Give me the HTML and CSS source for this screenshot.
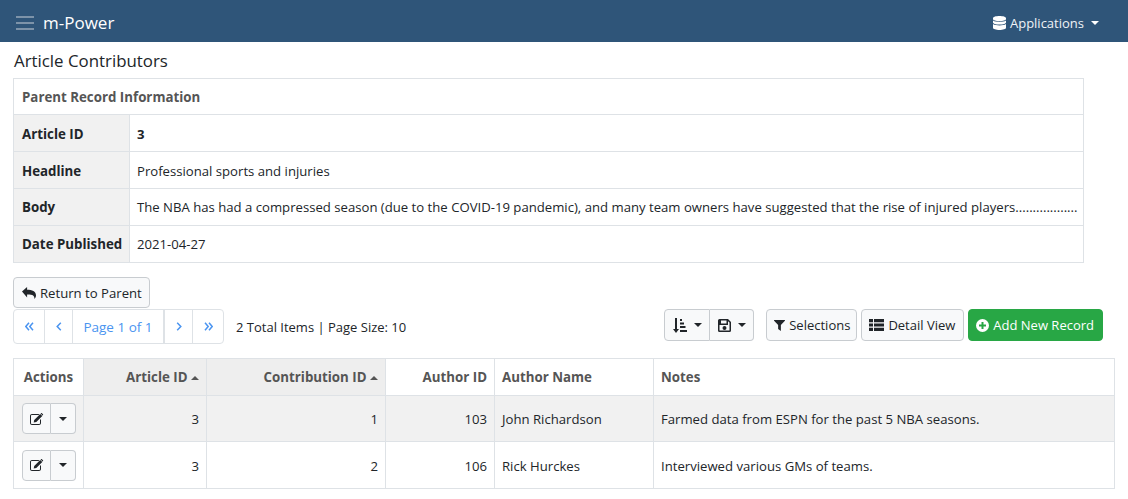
FILE: index.html
```html
<!DOCTYPE html>
<html lang="en">
<head>
<meta charset="utf-8">
<title>Article Contributors</title>
<link rel="stylesheet" href="styles.css">
</head>
<body>
<header class="navbar">
  <div class="brand">
    <svg class="burger" width="18" height="14" viewBox="0 0 18 14"><path d="M0 1h18M0 7h18M0 13h18" stroke="#7d93a9" stroke-width="2"/></svg>
    <span class="brand-name">m-Power</span>
  </div>
  <div class="apps">
    <svg class="apps-icon" width="13" height="14" viewBox="0 0 13 14"><path fill="#fff" d="M6.500 0C10 0 13 .9 13 2.200v.8c0 1.300-3 2.200-6.500 2.200S0 4.300 0 3v-.8C0 .9 3 0 6.500 0zM0 4.500c1.400 1 3.900 1.400 6.500 1.400s5.100-.4 6.500-1.400v2C13 7.700 10 8.600 6.500 8.600S0 7.700 0 6.500zM0 8c1.400 1 3.900 1.400 6.500 1.400S11.600 9 13 8v3.800C13 13.100 10 14 6.500 14S0 13.100 0 11.800z"/></svg>
    <span>Applications</span>
    <span class="caret caret-light"></span>
  </div>
</header>

<main class="page">
  <h1 class="title">Article Contributors</h1>

  <table class="parent">
    <colgroup><col class="parent-label"><col></colgroup>
    <tr class="parent-top"><th colspan="2" class="parent-head">Parent Record Information</th></tr>
    <tr class="nudge"><th>Article ID</th><td><b>3</b></td></tr>
    <tr class="nudge"><th>Headline</th><td>Professional sports and injuries</td></tr>
    <tr><th>Body</th><td>The NBA has had a compressed season (due to the COVID-19 pandemic), and many team owners have suggested that the rise of injured players..................</td></tr>
    <tr><th>Date Published</th><td>2021-04-27</td></tr>
  </table>

  <button class="btn return">
    <svg width="14" height="12" viewBox="0 0 14 12"><path fill="#212529" d="M0 4.600 5.100 0v2.800C10 2.900 14 4 14 8.600c0 1.500-.8 2.600-1.700 3.400.6-3.300-1.700-4.700-7.200-4.600v3z"/></svg>
    Return to Parent
  </button>

  <div class="toolbar">
    <nav class="pager">
      <a class="pg pg-first"><svg width="9" height="9" viewBox="0 0 9 9"><path d="M4 .8.8 4.500 4 8.200M8 .8 4.800 4.500 8 8.200" fill="none" stroke="#4a94f0" stroke-width="1.500"/></svg></a>
      <a class="pg pg-prev"><svg width="6" height="9" viewBox="0 0 6 9"><path d="M4.800.8 1.200 4.500l3.600 3.700" fill="none" stroke="#4a94f0" stroke-width="1.500"/></svg></a>
      <a class="pg pg-label">Page 1 of 1</a>
      <a class="pg pg-next"><svg width="6" height="9" viewBox="0 0 6 9"><path d="M1.200.8 4.800 4.500 1.200 8.200" fill="none" stroke="#4a94f0" stroke-width="1.500"/></svg></a>
      <a class="pg pg-last"><svg width="9" height="9" viewBox="0 0 9 9"><path d="M1 .8 4.200 4.500 1 8.200M5 .8 8.200 4.500 5 8.200" fill="none" stroke="#4a94f0" stroke-width="1.500"/></svg></a>
    </nav>
    <span class="summary">2 Total Items | Page Size: 10</span>
    <div class="tools">
      <div class="btn-group">
        <button class="btn">
          <svg width="14" height="15" viewBox="0 0 14 15"><path fill="#212529" d="M2 0h2v11h2l-3 4-3-4h2zM7 1h2v2H7zM7 4.500h4v2H7zM7 8h5.500v2H7zM7 12h7v2H7z"/></svg>
          <span class="caret"></span>
        </button>
        <button class="btn">
          <svg width="13" height="13" viewBox="0 0 13 13"><path fill="#212529" fill-rule="evenodd" d="M1.500 0H10l3 3v8.500A1.500 1.500 0 0 1 11.500 13h-10A1.500 1.500 0 0 1 0 11.500v-10A1.500 1.500 0 0 1 1.500 0zM3 1.500V4.500h5.500V1.500zM1.500 1.500v10h10V3.600L10 2.200v3.800H1.500zM6.500 7a2 2 0 1 1 0 4 2 2 0 0 1 0-4z"/></svg>
          <span class="caret"></span>
        </button>
      </div>
      <button class="btn btn-sel">
        <svg width="11" height="11" viewBox="0 0 12 12"><path fill="#212529" d="M.5 0h11c.5 0 .7.600.4.900L7.500 5.500V12L4.500 9.700V5.500L.1.900C-.2.600 0 0 .5 0z"/></svg>
        Selections
      </button>
      <button class="btn btn-detail">
        <svg width="15" height="12" viewBox="0 0 15 12"><path fill="#212529" d="M0 0h4v3.200H0zM5 0h10v3.200H5zM0 4.400h4v3.200H0zM5 4.400h10v3.200H5zM0 8.800h4V12H0zM5 8.800h10V12H5z"/></svg>
        Detail View
      </button>
      <button class="btn btn-add">
        <svg width="13" height="13" viewBox="0 0 13 13"><path fill="#fff" fill-rule="evenodd" d="M6.500 0a6.500 6.500 0 1 1 0 13 6.500 6.500 0 0 1 0-13zM5.500 3v2.500H3v2h2.500V10h2V7.500H10v-2H7.500V3z"/></svg>
        Add New Record
      </button>
    </div>
  </div>

  <table class="grid">
    <thead>
      <tr>
        <th class="col-act">Actions</th>
        <th class="num sorted col-art">Article ID <span class="sort"></span></th>
        <th class="num sorted col-con">Contribution ID <span class="sort"></span></th>
        <th class="num col-auth">Author ID</th>
        <th class="col-name">Author Name</th>
        <th>Notes</th>
      </tr>
    </thead>
    <tbody>
      <tr class="odd">
        <td class="cell-act"><div class="row-btns"><button class="btn"><svg width="14" height="12" viewBox="0 0 14 12"><use href="#edit"/></svg></button><button class="btn"><span class="caret"></span></button></div></td>
        <td class="num">3</td><td class="num">1</td><td class="num">103</td><td>John Richardson</td><td>Farmed data from ESPN for the past 5 NBA seasons.</td>
      </tr>
      <tr class="even">
        <td class="cell-act"><div class="row-btns"><button class="btn"><svg width="14" height="12" viewBox="0 0 14 12"><use href="#edit"/></svg></button><button class="btn"><span class="caret"></span></button></div></td>
        <td class="num">3</td><td class="num">2</td><td class="num">106</td><td>Rick Hurckes</td><td>Interviewed various GMs of teams.</td>
      </tr>
    </tbody>
  </table>
</main>

<svg width="0" height="0" class="defs">
  <symbol id="edit" viewBox="0 0 14 12">
    <path fill="#212529" fill-rule="evenodd" d="M2 1h7.500L8.500 2H2c-.6 0-1 .4-1 1v7c0 .6.400 1 1 1h7c.6 0 1-.4 1-1V7.100l1-1V10c0 1.100-.9 2-2 2H2c-1.100 0-2-.9-2-2V3c0-1.100.9-2 2-2z"/>
    <path fill="#212529" d="M4.200 7 10.200 1l2.100 2.100-6 6-2.600.5zM11 .2c.3-.2.600-.2.900 0l1.100 1.100c.2.300.2.600 0 .9l-.4.400-2-2z"/>
  </symbol>
</svg>
</body>
</html>
```
FILE: styles.css
```css
* { box-sizing: border-box; }

body {
  margin: 0;
  font-family: "Open Sans", "Noto Sans", sans-serif;
  font-size: 13.15px;
  color: #212529;
  background: #fff;
  overflow: hidden;
}

.navbar {
  height: 42px;
  background: #2f5579;
  color: #fff;
  display: flex;
  align-items: center;
  justify-content: space-between;
  padding: 3px 29px 0 16px;
}

.brand { display: flex; align-items: center; gap: 9px; }
.brand-name { font-size: 17px; }
.burger { display: block; }

.apps { display: flex; align-items: center; font-size: 13px; color: #f0f3f6; }
.apps-icon { margin-right: 4px; }

.caret {
  display: inline-block;
  width: 0;
  height: 0;
  border-left: 4.500px solid transparent;
  border-right: 4.500px solid transparent;
  border-top: 4.500px solid #212529;
}
.caret-light { border-top-color: #fff; margin-left: 7px; }

.page { padding: 0 13px; }

.title {
  margin: 0;
  height: 36px;
  padding-left: 1px;
  font-size: 16.850px;
  font-weight: 400;
  line-height: 37px;
}

table { border-collapse: collapse; table-layout: fixed; }

th { font-size: 13.300px; }

.parent { width: 1071px; }
.parent th, .parent td {
  height: 37px;
  padding: 0 0 0 8px;
  border: 1px solid #dee2e6;
  text-align: left;
  white-space: nowrap;
}
.parent .parent-top th { height: 36px; padding-top: 1px; }
.parent .nudge th, .parent .nudge td { padding-top: 2px; }
.parent th { background: #f1f1f1; font-weight: 700; }
.parent-label { width: 116px; }
.parent td { padding-left: 7px; }
.parent th.parent-head { background: #fff; color: #555; }

.btn {
  font: inherit;
  font-size: 13px;
  color: #212529;
  background: #f8f9fa;
  border: 1px solid #c8ccd0;
  border-radius: 4px;
  height: 32px;
  padding: 0 7px;
  display: inline-flex;
  align-items: center;
  gap: 4px;
}

.return { margin-top: 14px; display: flex; height: 31px; padding: 0 7px 0 8px; font-size: 13.150px; }

.toolbar { display: flex; align-items: flex-start; margin-top: 1px; }

.pager {
  display: flex;
  height: 35px;
  border: 1px solid #dee2e6;
  border-radius: 4px;
}
.pg {
  display: flex;
  align-items: center;
  justify-content: center;
  color: #4a94f0;
  border-left: 1px solid #dee2e6;
  font-size: 13.500px;
}
.pg-first { border-left: 0; width: 30px; }
.pg-prev { width: 28px; }
.pg-label { width: 92px; border-right: 1px solid #dee2e6; }
.pg-next { width: 28px; }
.pg-last { width: 31px; }

.summary { margin-left: 12px; font-size: 13px; line-height: 36px; }

.tools { margin-left: auto; padding-right: 12px; display: flex; align-items: center; gap: 4px; }
.btn-group { display: flex; margin-right: 8px; }
.btn-group .btn { gap: 7px; padding: 0 7px 0 8px; }
.btn-group .btn:first-child { border-radius: 4px 0 0 4px; }
.btn-group .btn:last-child { border-radius: 0 4px 4px 0; border-left: 0; }
.btn-sel { padding-right: 6px; }
.btn-detail { padding-right: 8px; }
.btn-add { background: #28a745; border-color: #28a745; color: #fff; padding-right: 8px; }

.grid { width: 1102px; margin-top: 13px; }
.grid th, .grid td {
  border: 1px solid #dee2e6;
  padding: 0 7px;
  text-align: left;
  white-space: nowrap;
}
.grid th { height: 37px; color: #555; font-weight: 700; }
.grid td { height: 47px; }
.grid .odd td { height: 46px; }
.grid .even td { padding-top: 1px; }
.grid .num { text-align: right; }
.grid th.sorted { background: #eee; }
.odd td { background: #f1f1f1; }
.grid th.col-act { width: 70px; text-align: center; padding: 0; }
.col-art { width: 123px; }
.col-con { width: 179px; }
.col-auth { width: 109px; }
.col-name { width: 159px; }

.sort {
  display: inline-block;
  width: 0;
  height: 0;
  vertical-align: 2px;
  border-left: 4.500px solid transparent;
  border-right: 4.500px solid transparent;
  border-bottom: 4.500px solid #555;
}

.row-btns { display: flex; }
.row-btns .btn { height: 31px; width: 29px; padding: 0; justify-content: center; }
.row-btns .btn:first-child { border-radius: 4px 0 0 4px; }
.row-btns .btn:last-child { border-radius: 0 4px 4px 0; border-left: 0; width: 25px; }
.grid td.cell-act { padding: 0 0 0 8px; }

.defs { position: absolute; }
```
